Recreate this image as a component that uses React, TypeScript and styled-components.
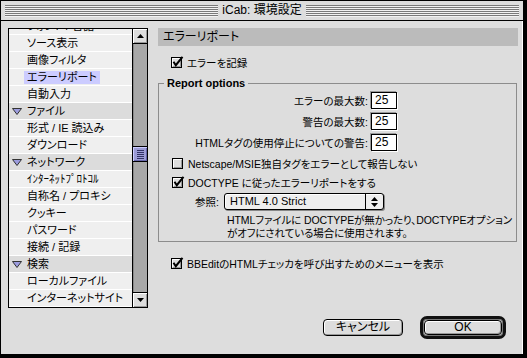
import React from "react";
import styled, { createGlobalStyle } from "styled-components";

const GlobalStyle = createGlobalStyle`
  html, body { margin: 0; padding: 0; background: #000; }
  body {
    font-family: "Liberation Sans", "Noto Sans CJK JP", sans-serif;
    font-size: 10.5px;
    font-feature-settings: "palt";
    color: #000;
  }
`;

const Window = styled.div`
  width: 527px;
  height: 358px;
  box-sizing: border-box;
  border: 1px solid #000;
  border-right-width: 4px;
  border-bottom-width: 4px;
  background: #dddddd;
  display: flex;
  flex-direction: column;
`;

const TitleBar = styled.div`
  height: 19px;
  flex: none;
  border-bottom: 1px solid #000;
  background: #dddddd;
  display: flex;
  align-items: center;
  padding: 0 4px 0 4px;
`;

const Stripes = styled.div`
  flex: 1;
  height: 12px;
  background: repeating-linear-gradient(to bottom, #7a7a7a 0 1px, #f2f2f2 1px 2px);
`;

const TitleText = styled.div`
  padding: 0 4px;
  font-size: 12px;
  line-height: 19px;
  white-space: nowrap;
`;

const Content = styled.div`
  flex: 1;
  display: flex;
  gap: 10px;
  padding: 7px 5px 0 7px;
  min-height: 0;
  box-shadow: inset -1px 0 0 #fff;
`;

/* ---------- left list ---------- */

const ListBox = styled.div`
  width: 140px;
  height: 280px;
  box-sizing: border-box;
  border: 1px solid #000;
  display: flex;
  background: #efefef;
  flex: none;
`;

const Rows = styled.div`
  flex: 1;
  overflow: hidden;
`;

const RowsInner = styled.div`
  margin-top: -11px;
`;

const Row = styled.div<{ $category?: boolean }>`
  height: 16px;
  border-bottom: 1px solid #fff;
  background: ${(p) => (p.$category ? "#dcdcdc" : "#efefef")};
  display: flex;
  align-items: center;
  padding-left: ${(p) => (p.$category ? "3px" : "18px")};
  white-space: nowrap;
  line-height: 16px;
  font-size: 11px;
`;

const Twisty = styled.svg`
  width: 10px;
  height: 7px;
  margin-right: 5px;
  flex: none;
`;

const RowLabel = styled.span<{ $selected?: boolean }>`
  background: ${(p) => (p.$selected ? "#ccccff" : "transparent")};
  padding: 0 3px;
  margin-left: -3px;
  line-height: 13px;
`;

const ScrollBar = styled.div`
  width: 15px;
  box-sizing: border-box;
  border-left: 1px solid #000;
  display: flex;
  flex-direction: column;
  background: #a8a8a8;
  flex: none;
`;

const ArrowBox = styled.div<{ $down?: boolean }>`
  height: 15px;
  box-sizing: border-box;
  background: #dddddd;
  ${(p) => (p.$down ? "border-top: 1px solid #000;" : "border-bottom: 1px solid #000;")}
  box-shadow: inset 1px 1px 0 #fff, inset -1px -1px 0 #999;
  display: flex;
  align-items: center;
  justify-content: center;
`;

const Track = styled.div`
  flex: 1;
  display: flex;
  flex-direction: column;
  box-shadow: inset 1px 0 0 #888;
`;

const Thumb = styled.div`
  height: 16px;
  box-sizing: border-box;
  border-top: 1px solid #000;
  border-bottom: 1px solid #000;
  background: #9c9cd6;
  box-shadow: inset 1px 1px 0 #ccccff, inset -1px -1px 0 #6666aa;
  display: flex;
  align-items: center;
  justify-content: center;
`;

/* ---------- right panel ---------- */

const Panel = styled.div`
  width: 360px;
  display: flex;
  flex-direction: column;
  flex: none;
`;

const Header = styled.div`
  height: 18px;
  background: #bbbbbb;
  font-size: 12px;
  line-height: 18px;
  padding-left: 5px;
`;

const CheckRow = styled.div<{ $top: number }>`
  display: flex;
  align-items: center;
  gap: 3px;
  height: 14px;
  margin-top: ${(p) => p.$top}px;
  margin-left: 13px;
  white-space: nowrap;
`;

const CheckSvg = styled.svg`
  width: 13px;
  height: 12px;
  flex: none;
`;

const Group = styled.fieldset`
  margin: 8px 1px 0 0;
  padding: 0;
  min-width: 0;
  border: 1px solid #8c8c8c;
  box-sizing: border-box;
  height: 165px;
`;

const Legend = styled.legend`
  margin-left: 5px;
  padding: 0 3px;
  font-weight: bold;
  font-size: 11px;
  line-height: 13px;
`;

const Fields = styled.div`
  display: grid;
  grid-template-columns: 209px 26px;
  column-gap: 3px;
  row-gap: 4px;
  margin-top: 2px;
  align-items: center;
`;

const FieldLabel = styled.div`
  text-align: right;
  white-space: nowrap;
`;

const NumberBox = styled.div`
  height: 17px;
  box-sizing: border-box;
  border: 1px solid #000;
  background: #fff;
  box-shadow: -1px -1px 0 #999, 1px 1px 0 #fff;
  font-size: 12px;
  line-height: 15px;
  padding-left: 3px;
`;

const PopupRow = styled.div`
  display: flex;
  align-items: center;
  margin-top: 4px;
  padding-left: 36px;
`;

const PopupLabel = styled.div`
  width: 29px;
`;

const Popup = styled.div`
  width: 160px;
  height: 17px;
  box-sizing: border-box;
  border: 1px solid #000;
  border-radius: 3px;
  background: #eeeeee;
  box-shadow: 1px 1px 0 #888, inset 1px 1px 0 #fff;
  display: flex;
`;

const PopupText = styled.div`
  flex: 1;
  font-size: 11px;
  line-height: 15px;
  padding-left: 5px;
`;

const PopupArrows = styled.div`
  width: 17px;
  border-left: 1px solid #000;
  display: flex;
  align-items: center;
  justify-content: center;
`;

const Note = styled.div`
  margin-top: 4px;
  padding-left: 68px;
  line-height: 13px;
  white-space: nowrap;
  letter-spacing: -0.1px;
`;

const ButtonRow = styled.div`
  margin-top: auto;
  margin-bottom: 15px;
  display: flex;
  justify-content: flex-end;
  align-items: center;
  gap: 17px;
  padding-right: 12px;
`;

const Button = styled.div<{ $width: number; $height: number }>`
  width: ${(p) => p.$width}px;
  height: ${(p) => p.$height}px;
  box-sizing: border-box;
  border: 1px solid #000;
  border-radius: 4px;
  background: #dddddd;
  box-shadow: inset 1px 1px 0 #fff, inset -1px -1px 0 #999;
  font-size: 12px;
  line-height: ${(p) => p.$height - 2}px;
  text-align: center;
`;

const DefaultRing = styled.div`
  padding: 1px;
  border: 3px solid #111;
  border-radius: 7px;
  box-shadow: inset 0 0 0 1px #777;
`;

interface IListItem {
  label: string;
  category?: boolean;
  selected?: boolean;
}

const listItems: IListItem[] = [
  { label: "フォント / 言語" },
  { label: "ソース表示" },
  { label: "画像フィルタ" },
  { label: "エラーリポート", selected: true },
  { label: "自動入力" },
  { label: "ファイル", category: true },
  { label: "形式 / IE 読込み" },
  { label: "ダウンロード" },
  { label: "ネットワーク", category: true },
  { label: "ｲﾝﾀｰﾈｯﾄﾌﾟﾛﾄｺﾙ" },
  { label: "自称名 / プロキシ" },
  { label: "クッキー" },
  { label: "パスワード" },
  { label: "接続 / 記録" },
  { label: "検索", category: true },
  { label: "ローカルファイル" },
  { label: "インターネットサイト" },
];

const fields = [
  { label: "エラーの最大数:", value: "25" },
  { label: "警告の最大数:", value: "25" },
  { label: "HTMLタグの使用停止についての警告:", value: "25" },
];

function CheckBox({ checked }: { checked?: boolean }) {
  return (
    <CheckSvg viewBox="0 0 13 12">
      <rect x="0.5" y="1.5" width="10" height="10" fill="#dcdcdc" stroke="#000" />
      <path d="M1.5 10 V2.5 H9.5" fill="none" stroke="#fff" />
      <path d="M2 10.5 H9.5 V3" fill="none" stroke="#999" />
      {checked && (
        <path d="M2.5 5.8 L4.8 9.2 L11.5 0.8" fill="none" stroke="#000" strokeWidth="2" />
      )}
    </CheckSvg>
  );
}

function ListPane() {
  return (
    <ListBox>
      <Rows>
        <RowsInner>
          {listItems.map((item) => (
            <Row key={item.label} $category={item.category}>
              {item.category && (
                <Twisty viewBox="0 0 10 7">
                  <polygon points="0.5,0.5 9.5,0.5 5,6.5" fill="#9c9cde" stroke="#333" strokeWidth="1" />
                </Twisty>
              )}
              <RowLabel $selected={item.selected}>{item.label}</RowLabel>
            </Row>
          ))}
        </RowsInner>
      </Rows>
      <ScrollBar>
        <ArrowBox>
          <svg width="7" height="4" viewBox="0 0 7 4">
            <polygon points="3.5,0 7,4 0,4" fill="#000" />
          </svg>
        </ArrowBox>
        <Track>
          <Thumb style={{ marginTop: 102 }}>
            <svg width="7" height="9" viewBox="0 0 7 9">
              {[0, 2, 4, 6, 8].map((y) => (
                <rect key={y} x="0" y={y} width="7" height="1" fill="#333366" />
              ))}
            </svg>
          </Thumb>
        </Track>
        <ArrowBox $down>
          <svg width="7" height="4" viewBox="0 0 7 4">
            <polygon points="0,0 7,0 3.5,4" fill="#000" />
          </svg>
        </ArrowBox>
      </ScrollBar>
    </ListBox>
  );
}

export default function App() {
  return (
    <>
      <GlobalStyle />
      <Window>
        <TitleBar>
          <Stripes />
          <TitleText>iCab: 環境設定</TitleText>
          <Stripes />
        </TitleBar>
        <Content>
          <ListPane />
          <Panel>
            <Header>エラーリポート</Header>
            <CheckRow $top={9}>
              <CheckBox checked />
              <span>エラーを記録</span>
            </CheckRow>
            <Group>
              <Legend>Report options</Legend>
              <Fields>
                {fields.map((f) => (
                  <React.Fragment key={f.label}>
                    <FieldLabel>{f.label}</FieldLabel>
                    <NumberBox>{f.value}</NumberBox>
                  </React.Fragment>
                ))}
              </Fields>
              <CheckRow $top={5}>
                <CheckBox />
                <span>Netscape/MSIE独自タグをエラーとして報告しない</span>
              </CheckRow>
              <CheckRow $top={5}>
                <CheckBox checked />
                <span>DOCTYPE に従ったエラーリポートをする</span>
              </CheckRow>
              <PopupRow>
                <PopupLabel>参照:</PopupLabel>
                <Popup>
                  <PopupText>HTML 4.0 Strict</PopupText>
                  <PopupArrows>
                    <svg width="7" height="10" viewBox="0 0 7 10">
                      <polygon points="3.5,0 7,4 0,4" fill="#000" />
                      <polygon points="0,6 7,6 3.5,10" fill="#000" />
                    </svg>
                  </PopupArrows>
                </Popup>
              </PopupRow>
              <Note>
                HTMLファイルに DOCTYPEが無かったり、DOCTYPEオプション
                <br />
                がオフにされている場合に使用されます。
              </Note>
            </Group>
            <CheckRow $top={14}>
              <CheckBox checked />
              <span>BBEditのHTMLチェッカを呼び出すためのメニューを表示</span>
            </CheckRow>
            <ButtonRow>
              <Button $width={80} $height={17}>キャンセル</Button>
              <DefaultRing>
                <Button $width={78} $height={15}>OK</Button>
              </DefaultRing>
            </ButtonRow>
          </Panel>
        </Content>
      </Window>
    </>
  );
}
